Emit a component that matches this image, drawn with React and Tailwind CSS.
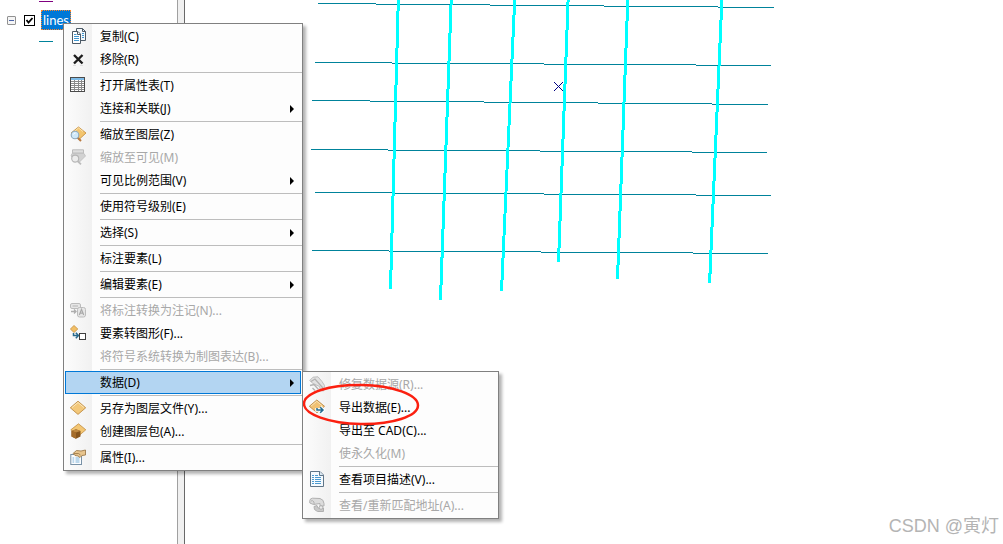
import { useState } from 'react';
import clsx from 'clsx';

// Each grid line drops one pixel at every x listed after the first
const GRID_LINES = [
  { y: 3, xs: [133, 191, 305, 419, 533, 589] },
  { y: 62, xs: [130, 207, 359, 511, 586] },
  { y: 100, xs: [127, 185, 299, 413, 527, 583] },
  { y: 149, xs: [126, 203, 355, 507, 582] },
  { y: 192, xs: [130, 210, 359, 511, 586] },
  { y: 250, xs: [127, 204, 356, 508, 583] },
];

const SELECTED_LINES = [
  { x1: 213.3, x2: 205.5, y2: 289 },
  { x1: 266.2, x2: 255.5, y2: 300 },
  { x1: 329.7, x2: 316.5, y2: 291 },
  { x1: 383.1, x2: 373.5, y2: 262 },
  { x1: 442.8, x2: 432.5, y2: 279 },
  { x1: 536.9, x2: 524.6, y2: 283 },
];

const ICONS = {
  copy: (
    <g strokeWidth="1" stroke="#4d5a66">
      <path d="M6.5 .5H12.5L15.5 3.5V12.5H6.5Z" fill="#f4f8fb" />
      <path d="M12.5 .5V3.5H15.5" fill="none" />
      <path d="M2.5 3.5H8L10.5 6V15.5H2.5Z" fill="#fff" />
      <path d="M7.5 3.5V6.5H10.5" fill="none" />
      <path d="M4 6.5H6.5M4 8.5H9M4 10.5H9M4 12.5H9M12 5.5H14M12 7.5H14M12 9.5H14" stroke="#3f96cf" fill="none" />
    </g>
  ),
  remove: (
    <>
      <path d="M3 14.5H6M10 14.5H13" stroke="#dedede" />
      <path d="M4 4L12.5 12.5M12.5 4L4 12.5" stroke="#1d1d1d" strokeWidth="2.4" fill="none" />
    </>
  ),
  table: (
    <g fill="none">
      <rect x=".5" y=".5" width="14" height="14" fill="#fff" stroke="#4b4b4b" />
      <path d="M1 2H14" stroke="#7dbbe8" strokeWidth="2" />
      <path d="M1 4.5H14M1 6.5H14M1 8.5H14M1 10.5H14M1 12.5H14M4.5 3V14M8.5 3V14M11.5 3V14" stroke="#8a8a8a" />
    </g>
  ),
  zoomLayer: (
    <>
      <path d="M8.5 1L16 7L9 13.5L1 7Z" fill="#f3c56f" stroke="#c48a38" strokeWidth=".8" />
      <path d="M3 6.5L8.5 2L13 5.5" stroke="#fbe5b2" fill="none" />
      <path d="M7.5 11.5L11 15" stroke="#b8793f" strokeWidth="2" />
      <circle cx="5" cy="9" r="3.8" fill="#cfe8f8" stroke="#8ea9bd" strokeWidth="1.1" />
      <path d="M3.5 8.5Q4 7 5.5 7" stroke="#fff" fill="none" />
    </>
  ),
  zoomVisible: (
    <>
      <path d="M2.5 4V.8H13.5V4Z" fill="#dedede" stroke="#bdbdbd" />
      <path d="M2 4.5H14L15.5 7L9 13.5L1 7Z" fill="#d2d2d2" stroke="#bebebe" strokeWidth=".8" />
      <path d="M7.5 12L11 15.3" stroke="#bcbcbc" strokeWidth="1.8" />
      <circle cx="5.2" cy="9.6" r="3.5" fill="#ececec" stroke="#b5b5b5" strokeWidth="1.1" />
    </>
  ),
  annotation: (
    <g fill="#e6e6e6" stroke="#bcbcbc">
      <rect x=".5" y="1.5" width="10" height="5" rx="1.5" />
      <path d="M2.5 4H8" stroke="#b4b4b4" />
      <rect x="7.5" y="5.5" width="8" height="9.5" rx="2" />
      <path d="M9.3 13L11.5 7.3L13.7 13M10 11.2H13" stroke="#a9a9a9" strokeWidth="1.2" fill="none" />
      <path d="M1 9.5H5.5M4 7.5L6 9.5L4 11.5" stroke="#aeaeae" strokeWidth="1.3" fill="none" />
    </g>
  ),
  toGraphics: (
    <>
      <path d="M4 .5L7.8 4L4 7.5L.4 4Z" fill="#f2bf66" stroke="#c79140" strokeWidth=".8" />
      <path d="M3.5 8V10.5H8M5.8 7.8L8.5 10.5L5.8 13.2" stroke="#27698d" strokeWidth="1.5" fill="none" />
      <rect x="9.5" y="8.5" width="6" height="6" fill="#fff" stroke="#3f3f3f" />
    </>
  ),
  layer: (
    <>
      <path d="M8 1.2L15.7 7.8L8 14.4L.3 7.8Z" fill="#f3c87a" stroke="#bf8d45" strokeWidth=".9" />
      <path d="M2 7.6L8 2.5L14 7.6" stroke="#fbe8bd" fill="none" />
    </>
  ),
  layerPackage: (
    <>
      <path d="M8.5 .8L15.8 6.8L8.5 13L.8 6.8Z" fill="#f3c673" stroke="#c18e43" strokeWidth=".8" />
      <path d="M1.5 8L6 6.2L10.5 8V13.5L6 15.7L1.5 13.5Z" fill="#87551d" />
      <path d="M1.5 8L6 6.2L10.5 8L6 9.5Z" fill="#c08a42" />
      <path d="M1.5 8L6 9.5V15.7L1.5 13.5Z" fill="#a66d2b" />
    </>
  ),
  properties: (
    <>
      <rect x=".8" y="5.5" width="10.7" height="10" fill="#fbfdff" stroke="#7891a6" />
      <path d="M2.5 9H4.2M2.5 11H4.2M2.5 13H4.2M5.5 9H9.5M5.5 11H9.5M5.5 13H9.5" stroke="#7cb2d8" />
      <path d="M3 4.5L6.5 1.5L11 2L15.5 1V6L12 6.5L10 8.5L8 7L5 6.5Z" fill="#e8c58e" stroke="#94703f" strokeWidth=".8" />
      <path d="M4 4.6L8.5 4.5L10.5 6" stroke="#94703f" strokeWidth=".8" fill="none" />
    </>
  ),
  repair: (
    <g fill="#e2e2e2" stroke="#bdbdbd">
      <path d="M.7 4.5L4 1.2L9 .8L13 5.5L15.5 9.5L14.5 15L11.5 14.5L10.5 10.5L4 7.5Z" />
      <path d="M2 5.5L6 3L13.5 11.5V14.5M1 9.5L5 8.5L9.5 13.5M3.5 12L6 14.5" stroke="#b2b2b2" strokeWidth="1.3" fill="none" />
    </g>
  ),
  exportData: (
    <>
      <path d="M7.8 1L15.5 7.3L8 13.7L.3 7.3Z" fill="#f0c173" stroke="#bb8a46" strokeWidth=".9" />
      <path d="M2 7.1L7.8 2.3L13.5 7.1" stroke="#fae3b3" fill="none" />
      <path d="M8 9V11H14M11.2 8.2L14 11L11.2 13.8" stroke="#fff" strokeWidth="3.4" fill="none" />
      <path d="M8 9V11H14M11.2 8.2L14 11L11.2 13.8" stroke="#226b8f" strokeWidth="1.5" fill="none" />
    </>
  ),
  description: (
    <>
      <path d="M1.5 .5H11L14.5 4V15.5H1.5Z" fill="#f5fafe" stroke="#5f7588" />
      <path d="M10.5 .5V4.5H14.5" fill="#dce9f3" stroke="#5f7588" />
      <path d="M3 4.5H5M6 4.5H9M3 6.5H5M6 6.5H12M3 8.5H5M6 8.5H12M3 10.5H5M6 10.5H12M3 12.5H5M6 12.5H12" stroke="#4b9ad0" />
    </>
  ),
  rematch: (
    <g fill="#dcdcdc" stroke="#b0b0b0">
      <path d="M.8 6V3.5Q1 1.5 3.5 1.2L11 1.5Q14.8 2.5 15 6.5V9H11V6.5L4.5 7.5Z" />
      <path d="M2 4Q3.5 2.8 5 5V7.5" fill="none" />
      <path d="M5 9.5L8 8.5L9 11H14.5V14.5H8.5L5.5 12.5Z" fill="#c9c9c9" />
      <circle cx="12" cy="10.5" r="1.8" fill="#ebebeb" />
    </g>
  ),
};

const DATA_ITEMS = [
  { label: '修复数据源(R)...', icon: 'repair', disabled: true },
  { label: '导出数据(E)...', icon: 'exportData', circled: true },
  { label: '导出至 CAD(C)...' },
  { label: '使永久化(M)', disabled: true },
  { separator: true },
  { label: '查看项目描述(V)...', icon: 'description' },
  { separator: true },
  { label: '查看/重新匹配地址(A)...', icon: 'rematch', disabled: true },
];

const LAYER_ITEMS = [
  { label: '复制(C)', icon: 'copy' },
  { label: '移除(R)', icon: 'remove' },
  { separator: true },
  { label: '打开属性表(T)', icon: 'table' },
  { label: '连接和关联(J)', arrow: true },
  { separator: true },
  { label: '缩放至图层(Z)', icon: 'zoomLayer' },
  { label: '缩放至可见(M)', icon: 'zoomVisible', disabled: true },
  { label: '可见比例范围(V)', arrow: true },
  { separator: true },
  { label: '使用符号级别(E)' },
  { separator: true },
  { label: '选择(S)', arrow: true },
  { separator: true },
  { label: '标注要素(L)' },
  { separator: true },
  { label: '编辑要素(E)', arrow: true },
  { separator: true },
  { label: '将标注转换为注记(N)...', icon: 'annotation', disabled: true },
  { label: '要素转图形(F)...', icon: 'toGraphics' },
  { label: '将符号系统转换为制图表达(B)...', disabled: true },
  { separator: true },
  { label: '数据(D)', arrow: true, children: DATA_ITEMS },
  { separator: true },
  { label: '另存为图层文件(Y)...', icon: 'layer' },
  { label: '创建图层包(A)...', icon: 'layerPackage' },
  { separator: true },
  { label: '属性(I)...', icon: 'properties' },
];

function MenuItem({ item }) {
  return (
    <li role="none" className="relative px-px">
      <button
        type="button"
        role="menuitem"
        disabled={item.disabled}
        aria-haspopup={item.arrow ? 'menu' : undefined}
        className={clsx(
          'flex h-[23px] w-full items-center gap-3.5 border pl-1 pr-1.5 text-left',
          item.children ? 'border-[#0078d7] bg-[#b3d5f2]' : 'border-transparent',
          item.disabled ? 'text-[#a8a8a8]' : 'text-black'
        )}
      >
        <svg viewBox="0 0 16 16" className="mb-px size-4 shrink-0" aria-hidden="true">
          {ICONS[item.icon]}
        </svg>
        <span className="grow whitespace-nowrap">{item.label}</span>
        {item.arrow && (
          <svg viewBox="0 0 4 8" className="h-2 w-1 shrink-0" aria-hidden="true">
            <path d="M0 0L4 4L0 8Z" />
          </svg>
        )}
      </button>

      {item.children && <Menu items={item.children} className="left-full top-0 w-[197px]" />}

      {item.circled && (
        <svg
          viewBox="0 0 120 44"
          className="pointer-events-none absolute -top-3.5 left-0 z-10 h-11 w-[120px]"
          aria-hidden="true"
        >
          <ellipse
            cx="58"
            cy="22.5"
            rx="57"
            ry="19.5"
            transform="rotate(1 58 22)"
            fill="none"
            stroke="#fb2010"
            strokeWidth="2.5"
          />
        </svg>
      )}
    </li>
  );
}

function Menu({ items, className }) {
  return (
    <ul
      role="menu"
      className={clsx(
        'absolute border border-[#808080] bg-[#fdfdfd] bg-linear-to-r from-[#fcfcfc] to-[#f1f1f1] bg-[length:27px_100%] bg-[position:1px_0] bg-no-repeat py-px text-xs shadow-[3px_3px_3px_rgba(0,0,0,0.3)]',
        className
      )}
    >
      {items.map((item, i) =>
        item.separator ? (
          <li key={i} role="separator" className="py-px pl-9">
            <div className="h-px bg-[#bdbdbd]" />
          </li>
        ) : (
          <MenuItem key={i} item={item} />
        )
      )}
    </ul>
  );
}

function LayerTree() {
  const [visible, setVisible] = useState(true);

  return (
    <aside className="w-[177px] shrink-0 bg-white">
      <div className="ml-[39px] mt-px h-px w-3.5 bg-[#800080]" />
      <div className="mt-2 flex items-center pl-[7px]">
        <button
          type="button"
          aria-label="lines -"
          className="flex size-[9px] items-center justify-center rounded-[1px] border border-[#919191] bg-[#f5f5f5]"
        >
          <span className="h-px w-[5px] bg-[#4b63a7]" />
        </button>
        <span className="relative ml-2 flex size-[11px]">
          <input
            id="layer-lines"
            type="checkbox"
            checked={visible}
            onChange={(e) => setVisible(e.target.checked)}
            className="size-[11px] appearance-none border border-black bg-white"
          />
          {visible && (
            <svg viewBox="0 0 11 11" className="pointer-events-none absolute inset-0" aria-hidden="true">
              <path d="M2.5 5L4.5 7.5L8.5 3" fill="none" stroke="#000" strokeWidth="1.8" />
            </svg>
          )}
        </span>
        <label
          htmlFor="layer-lines"
          className="ml-1.5 border border-dotted border-[#ff8728] bg-[#0078d7] px-px font-[Lato,sans-serif] text-[13px] leading-[18px] text-white"
        >
          lines
        </label>
      </div>
      <div className="ml-[39px] mt-[11px] h-px w-3.5 bg-[#00839b]" />
    </aside>
  );
}

function MapView() {
  return (
    <main className="min-w-0 grow overflow-hidden bg-white">
      <svg className="h-full w-full" shapeRendering="crispEdges" aria-hidden="true">
        {GRID_LINES.map(({ y, xs }) => (
          <path
            key={y}
            d={xs.slice(1).map((x, i) => `M${xs[i]} ${y + i + 0.5}H${x}`).join('')}
            stroke="#00839b"
          />
        ))}
        {SELECTED_LINES.map(({ x1, x2, y2 }) => (
          <line key={x1} x1={x1} y1="0" x2={x2} y2={y2} stroke="#00ffff" strokeWidth="3" />
        ))}
        <path d="M369 82L378 91M378 82L369 91" stroke="#000080" />
      </svg>
    </main>
  );
}

export default function App() {
  return (
    <div className="relative flex min-h-screen overflow-hidden bg-white font-['Noto_Sans','Noto_Sans_CJK_SC',sans-serif]">
      <LayerTree />
      <div className="w-2 shrink-0 border-l border-r border-l-[#a0a0a0] border-r-[#696969] bg-[#f0f0f0]" />
      <MapView />

      <Menu items={LAYER_ITEMS} className="left-[63px] top-[23px] w-60" />

      <p className="absolute bottom-1 right-1 font-['Liberation_Sans','Noto_Sans_CJK_SC',sans-serif] text-lg text-[#b4b4b4]">
        CSDN @寅灯
      </p>
    </div>
  );
}
